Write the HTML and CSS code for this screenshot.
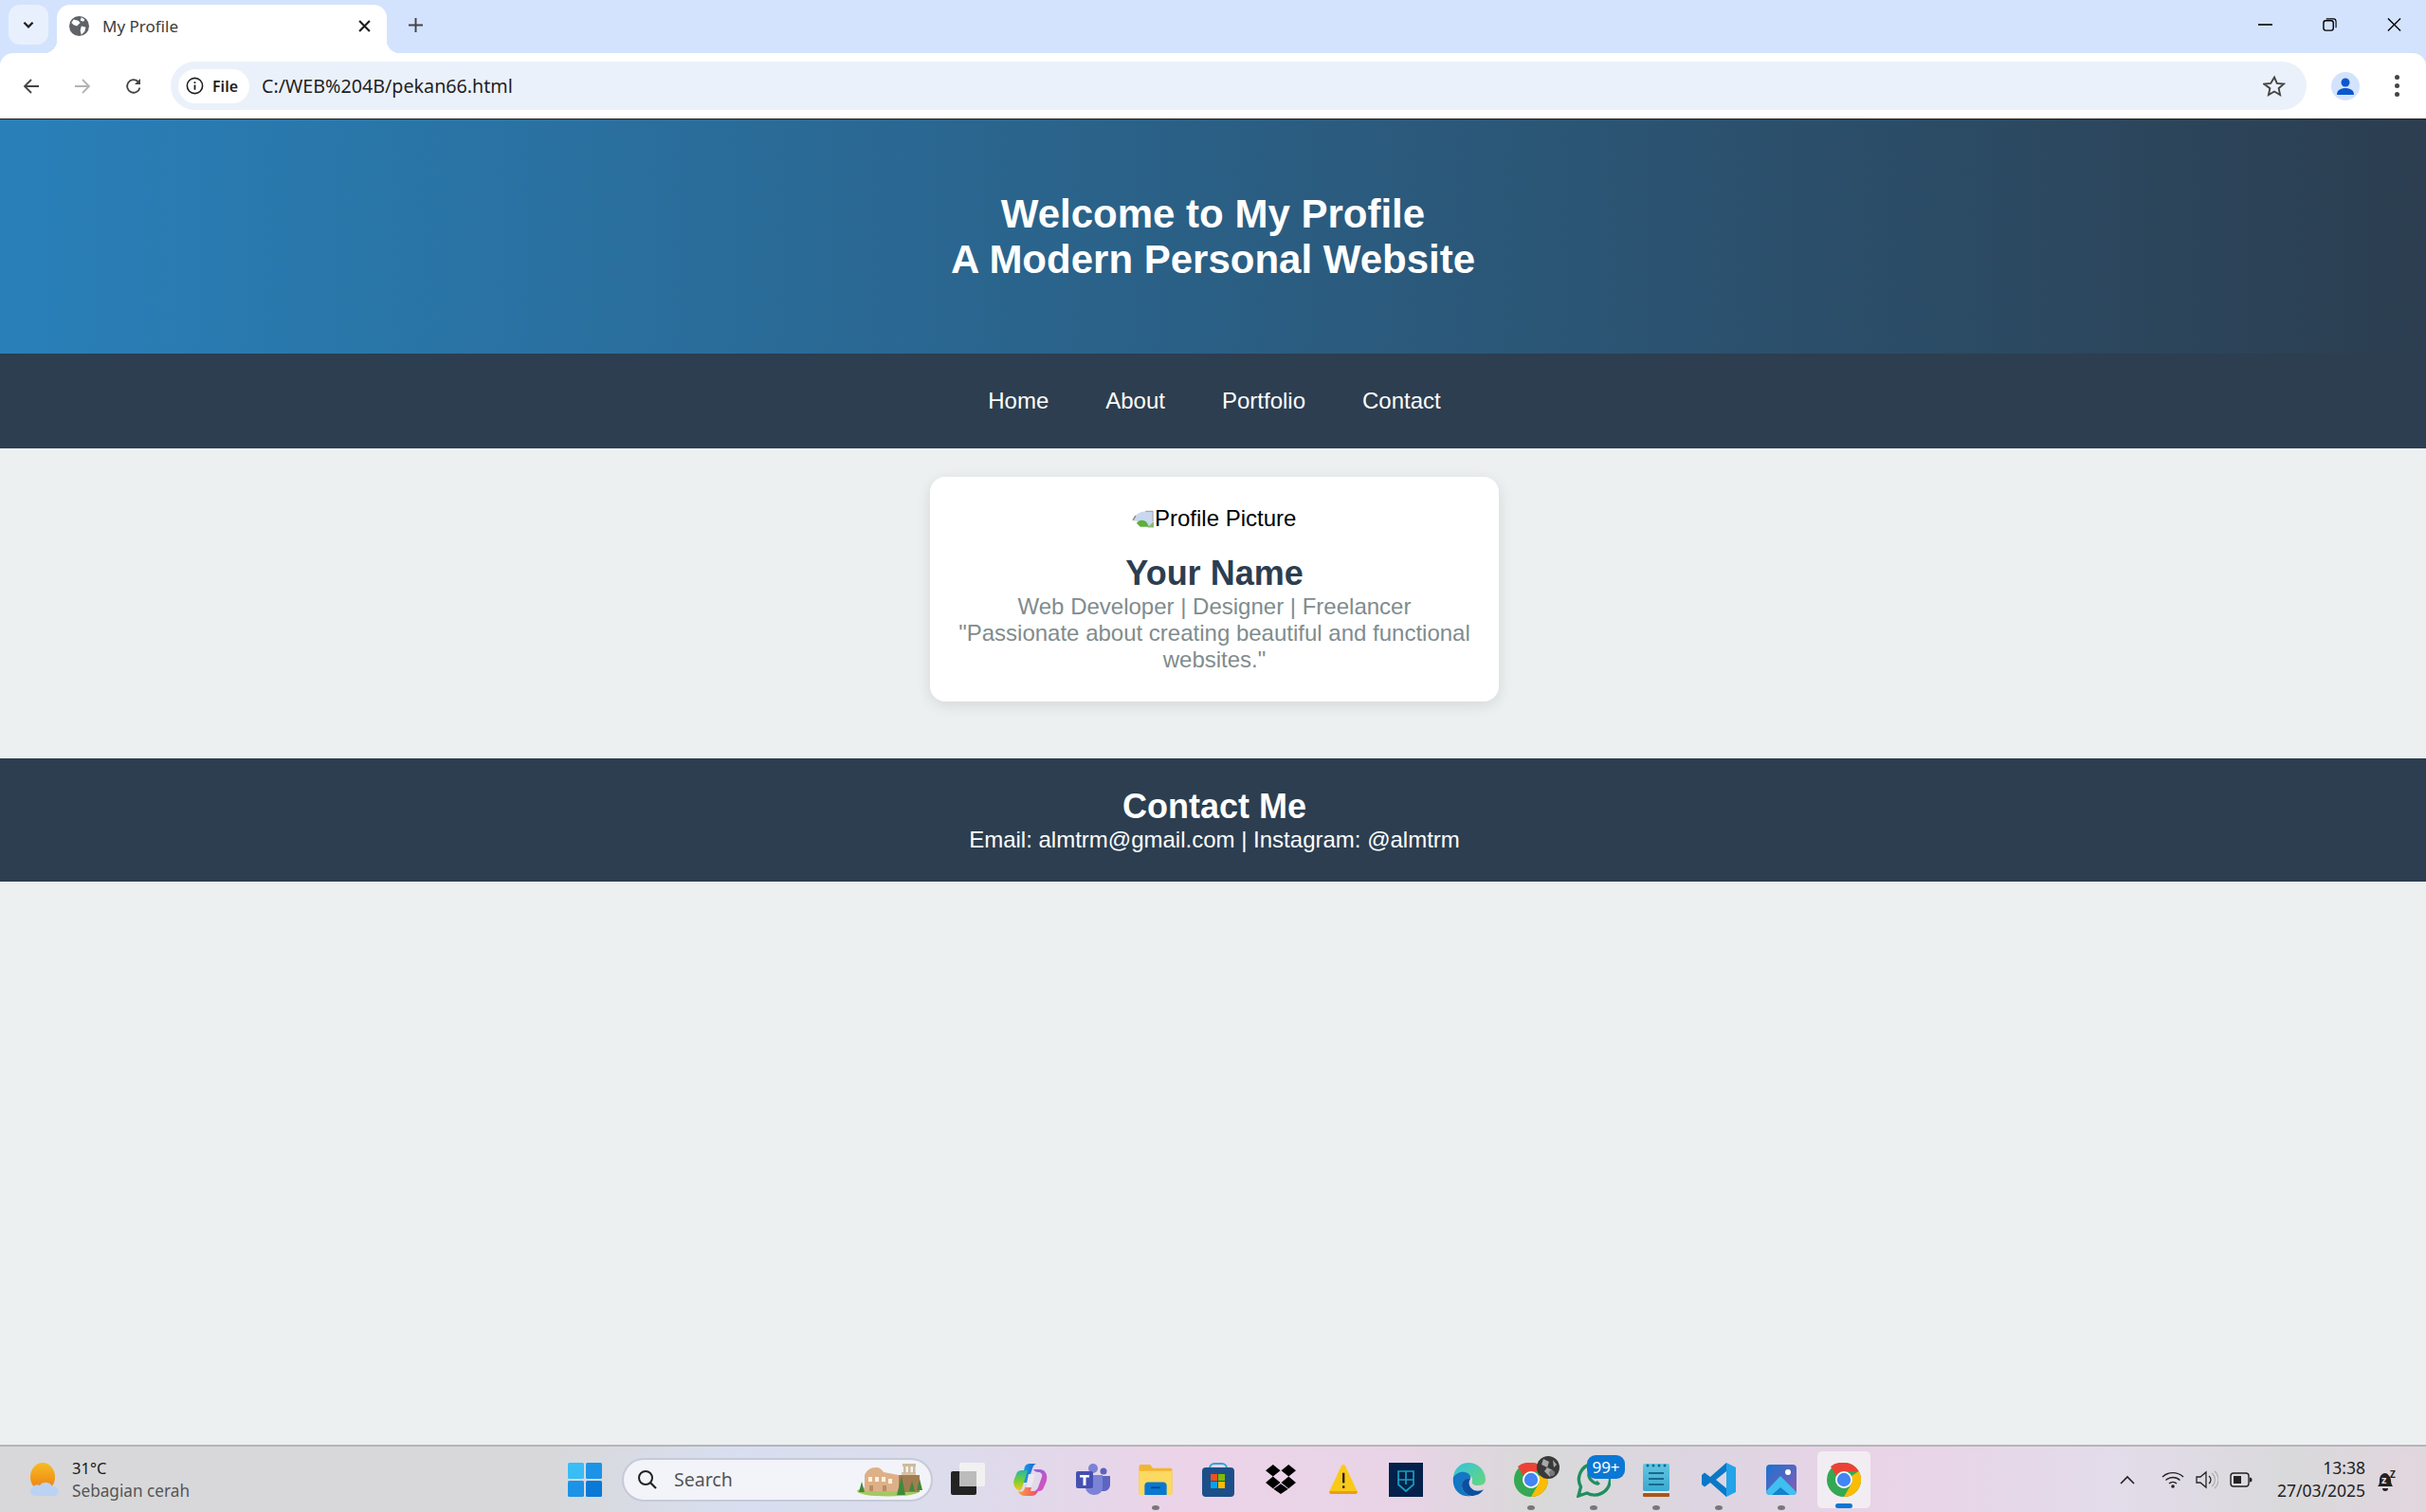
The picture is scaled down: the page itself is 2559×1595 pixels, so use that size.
FILE: index.html
```html
<!DOCTYPE html>
<html lang="en">
<head>
    <meta charset="UTF-8">
    <meta name="viewport" content="width=device-width, initial-scale=1.0">
    <title>My Profile</title>
    <link rel="stylesheet" href="styles.css">
</head>
<body>
<div class="screen">
    <!-- browser top -->
    <div class="tabstrip">
        <div class="tab-search">
            <svg width="16" height="16" viewBox="0 0 14 14"><path d="M3 5l4 4 4-4" fill="none" stroke="#1f1f1f" stroke-width="2"/></svg>
        </div>
        <div class="tab">
            <svg class="favicon" width="21" height="21" viewBox="0 0 18 18">
                <circle cx="9" cy="9" r="9" fill="#5f6368"/>
                <path d="M4 3l4 1 2 2-2 2-1 1-3-1-2-2zM11 9l4 1-1 4-3 3-1-4zM11 1l3 2-1 2-3-1z" fill="#fff"/>
            </svg>
            <span class="tab-title">My Profile</span>
            <svg class="tab-close" width="13" height="13" viewBox="0 0 12 12"><path d="M1 1l10 10M11 1L1 11" stroke="#1f1f1f" stroke-width="2"/></svg>
        </div>
        <svg class="new-tab" width="15" height="15" viewBox="0 0 14 14"><path d="M7 0v14M0 7h14" stroke="#444" stroke-width="1.800"/></svg>
        <div class="window-btns">
            <svg width="15" height="16" viewBox="0 0 15 16"><path d="M0 8h15" stroke="#000" stroke-width="1.600"/></svg>
            <svg width="15" height="16" viewBox="0 0 16 16"><rect x="1" y="3.500" width="11" height="11" rx="2.500" fill="none" stroke="#000" stroke-width="1.500"/><path d="M4 1.500h8a3 3 0 0 1 3 3v7" fill="none" stroke="#000" stroke-width="1.200"/></svg>
            <svg width="15" height="16" viewBox="0 0 16 16"><path d="M1 1l14 14M15 1L1 15" stroke="#000" stroke-width="1.500"/></svg>
        </div>
    </div>
    <div class="toolbar">
        <svg class="tool-icon" width="18" height="18" viewBox="0 0 18 18"><path d="M17 9H2M9 2L2 9l7 7" fill="none" stroke="#444" stroke-width="1.800"/></svg>
        <svg class="tool-icon" width="18" height="18" viewBox="0 0 18 18"><path d="M1 9h15M9 2l7 7-7 7" fill="none" stroke="#b3b3b3" stroke-width="1.800"/></svg>
        <svg class="tool-icon" width="18" height="18" viewBox="0 0 18 18"><path d="M15.500 10.500A6.800 6.800 0 1 1 13.600 4" fill="none" stroke="#444" stroke-width="1.800"/><path d="M16 1v6h-6z" fill="#444"/></svg>
        <div class="omnibox">
            <div class="chip">
                <svg width="19" height="19" viewBox="0 0 18 18"><circle cx="9" cy="9" r="7.700" fill="none" stroke="#1f1f1f" stroke-width="1.500"/><path d="M9 8v5M9 5v1.600" stroke="#1f1f1f" stroke-width="1.700"/></svg>
                <span>File</span>
            </div>
            <span class="url">C:/WEB%204B/pekan66.html</span>
            <svg class="star" width="24" height="24" viewBox="0 0 24 24"><path d="M12 2.500l2.800 6.400 7 .7-5.200 4.600 1.500 6.800-6.100-3.500-6.100 3.500 1.500-6.800L1.200 9.600l7-.7z" fill="none" stroke="#444" stroke-width="1.900"/></svg>
        </div>
        <div class="avatar">
            <svg width="20" height="20" viewBox="0 0 20 20"><circle cx="10" cy="6" r="4.500" fill="#0b57d0"/><path d="M1 19c0-5 4-7 9-7s9 2 9 7z" fill="#0b57d0"/></svg>
        </div>
        <div class="kebab"><i></i><i></i><i></i></div>
    </div>

    <!-- the page itself -->
    <main class="page">
        <header class="hero">
            <h1>Welcome to My Profile<br>A Modern Personal Website</h1>
        </header>
        <nav class="menu">
            <a href="#">Home</a>
            <a href="#">About</a>
            <a href="#">Portfolio</a>
            <a href="#">Contact</a>
        </nav>
        <section class="card">
            <div class="broken-img">
                <svg width="24" height="19" viewBox="0 0 25 19"><path d="M15 1h8v16h-4L9 13 1 11l3-6 6-3z" fill="#c9d7ef"/><path d="M5 14c3-4 8-4 11-1l3 5H9z" fill="#5daf3b"/><path d="M15 1h8v11" fill="none" stroke="#aaa" stroke-width="1.200"/><path d="M24 12v7h-7z" fill="#8cbb70"/><path d="M1 11l3-5" stroke="#888" stroke-width="1.500"/></svg>
                <span>Profile Picture</span>
            </div>
            <h2>Your Name</h2>
            <p>Web Developer | Designer | Freelancer</p>
            <p>"Passionate about creating beautiful and functional websites."</p>
        </section>
        <footer class="contact">
            <h2>Contact Me</h2>
            <p>Email: almtrm@gmail.com | Instagram: @almtrm</p>
        </footer>
    </main>

    <!-- windows taskbar -->
    <div class="taskbar">
        <div class="weather">
            <svg width="36" height="38" viewBox="0 0 36 38">
                <defs><linearGradient id="sun" x1="0" y1="0" x2="0" y2="1"><stop offset="0" stop-color="#f6bd22"/><stop offset="1" stop-color="#ef7b12"/></linearGradient></defs>
                <ellipse cx="15" cy="16" rx="13" ry="15" fill="url(#sun)"/>
                <path d="M7 36a5 5 0 0 1-3-9 6 6 0 0 1 8-2 7.500 7.500 0 0 1 13 1 5 5 0 0 1 3 10z" fill="#bcd2f3"/>
            </svg>
            <div>
                <div class="temp">31°C</div>
                <div class="sky">Sebagian cerah</div>
            </div>
        </div>
        <div class="task-center">
            <div class="task-item">
                <svg width="36" height="36" viewBox="0 0 36 36"><rect width="17" height="17" rx="1.500" fill="#39bdf6"/><rect x="19" width="17" height="17" rx="1.500" fill="#1c93e6"/><rect y="19" width="17" height="17" rx="1.500" fill="#1c93e6"/><rect x="19" y="19" width="17" height="17" rx="1.500" fill="#0a78d6"/></svg>
            </div>
            <div class="search-box">
                <svg width="22" height="22" viewBox="0 0 22 22"><circle cx="9" cy="9" r="7" fill="none" stroke="#222" stroke-width="2"/><path d="M14 14l6 6" stroke="#222" stroke-width="2.200"/></svg>
                <span>Search</span>
                <svg class="search-art" width="70" height="36" viewBox="0 0 70 36">
                    <ellipse cx="33" cy="30" rx="33" ry="5.500" fill="#a5c862"/>
                    <path d="M8 30V13c2-5 6-8 12-8 4 0 6 2 8 5l16 3v17z" fill="#deb088"/>
                    <rect x="44" y="13" width="22" height="18" fill="#a57c52"/>
                    <rect x="47" y="10" width="15" height="3" fill="#d6c4a8"/>
                    <path d="M48 1h14v3H48zM49 4h2.500v7H49zM54 4h2.500v7H54zM59 4h2.500v7H59z" fill="#d0ba9a"/>
                    <rect x="12" y="15" width="4" height="5" fill="#fff2df"/><rect x="19" y="15" width="4" height="5" fill="#fff2df"/><rect x="26" y="15" width="4" height="5" fill="#fff2df"/><rect x="33" y="17" width="4" height="5" fill="#fff2df"/>
                    <rect x="13" y="24" width="4" height="6" fill="#b98d64"/><rect x="27" y="24" width="4" height="6" fill="#b98d64"/>
                    <path d="M5 20l3 11H2zM47 14l4 20h-9zM58 19l3 11h-6zM66 17l3 12h-6z" fill="#3f8a3a"/>
                </svg>
            </div>
            <div class="task-item">
                <svg width="36" height="35" viewBox="0 0 36 35"><rect x="0" y="9" width="27" height="25" rx="2" fill="#232323"/><rect x="9" y="0" width="27" height="25" rx="2" fill="#f1f1f1"/><rect x="9" y="9" width="18" height="16" fill="#bcbcbc"/></svg>
            </div>
            <div class="task-item">
                <svg width="36" height="34" viewBox="0 0 36 34">
                    <defs>
                        <linearGradient id="cop1" x1="0" y1="0" x2="1" y2="0"><stop offset="0" stop-color="#1aa6e8"/><stop offset="1" stop-color="#1d5fd0"/></linearGradient>
                        <linearGradient id="cop2" x1="0" y1="0" x2="0" y2="1"><stop offset="0" stop-color="#25b8a8"/><stop offset=".55" stop-color="#7fd02c"/><stop offset="1" stop-color="#fbc51c"/></linearGradient>
                        <linearGradient id="cop3" x1="0" y1="0" x2="1" y2="1"><stop offset="0" stop-color="#8a63e8"/><stop offset="1" stop-color="#e94fb0"/></linearGradient>
                        <linearGradient id="cop4" x1="0" y1="0" x2="1" y2="0"><stop offset="0" stop-color="#f8a23a"/><stop offset="1" stop-color="#ee4a6e"/></linearGradient>
                    </defs>
                    <path d="M12 3c1-2 3-3 5-3h8c-3 0-4 2-5 5l-5 15H8z" fill="url(#cop1)"/>
                    <path d="M9 7h6L9 26c-1 2-2 3-4 2-4-2-6-7-4-12l2-5c1-3 3-4 6-4z" fill="url(#cop2)"/>
                    <path d="M21 6h6c4 0 7 2 8 6 1 5-1 9-3 13-1 3-3 4-6 4h-5c3 0 4-2 5-4l4-11c1-3-1-5-4-5-2 0-4-1-5-3z" fill="url(#cop3)"/>
                    <path d="M11 28l4-8h5l-2 9c-1 3-3 5-6 5-3 0-6-2-7-5 2 1 5 1 6-1z M18 29h8c-1 3-4 5-7 5h-7c3 0 5-2 6-5z" fill="url(#cop4)"/>
                    <path d="M16 11h7l-4 14h-6z" fill="#efe6f0"/>
                </svg>
            </div>
            <div class="task-item">
                <svg width="36" height="33" viewBox="0 0 36 33">
                    <circle cx="18" cy="5" r="5" fill="#7b83d6"/><circle cx="29" cy="8" r="3.500" fill="#5b63bd"/>
                    <path d="M24 13h12v9c0 4-3 7-6 7h-6z" fill="#5d65c0"/>
                    <path d="M10 12h18v13c0 5-4 8-9 8s-9-4-9-8z" fill="#7b83d6"/>
                    <rect x="0" y="8" width="18" height="18" rx="2" fill="#4650b0"/>
                    <path d="M4 12h10v2.500h-3.500V23H7.500v-8.500H4z" fill="#fff"/>
                </svg>
            </div>
            <div class="task-item has-dot">
                <svg width="36" height="33" viewBox="0 0 36 34"><path d="M0 3a2 2 0 0 1 2-2h10l3 4h19a2 2 0 0 1 2 2v25a2 2 0 0 1-2 2H2a2 2 0 0 1-2-2z" fill="#f2b531"/><path d="M0 8h36v24a2 2 0 0 1-2 2H2a2 2 0 0 1-2-2z" fill="#fcd960"/><path d="M6 34V24a4 4 0 0 1 4-4h16a4 4 0 0 1 4 4v10z" fill="#0a78d0"/><rect x="13" y="25" width="10" height="2" fill="#034f9a"/></svg>
            </div>
            <div class="task-item">
                <svg width="36" height="36" viewBox="0 0 36 36"><path d="M9 6a5 5 0 0 1 5-5h8a5 5 0 0 1 5 5v3" fill="none" stroke="#25a7dc" stroke-width="2"/><rect x="1" y="5" width="34" height="31" rx="4" fill="#1c4f8a"/><rect x="10" y="12" width="7" height="7" fill="#f25022"/><rect x="18" y="12" width="7" height="7" fill="#7fba00"/><rect x="10" y="20" width="7" height="7" fill="#00a4ef"/><rect x="18" y="20" width="7" height="7" fill="#ffb900"/></svg>
            </div>
            <div class="task-item">
                <svg width="36" height="31" viewBox="0 0 36 32"><path d="M9.500 0l8 6.500-8 6.500-8-6.500zM26.500 0l8 6.500-8 6.500-8-6.500zM9.500 13l8 6.500-8 6.500-8-6.500zM26.500 13l8 6.500-8 6.500-8-6.500zM18 21l8 5.500-8 5.500-8-5.500z" fill="#000"/></svg>
            </div>
            <div class="task-item">
                <svg width="32" height="33" viewBox="0 0 32 34"><path d="M16 1c1 0 2 1 2.500 2L31 30c.6 1.500-.3 3-2 3H3c-1.700 0-2.600-1.500-2-3L13.500 3c.5-1 1.500-2 2.500-2z" fill="#fbc91a"/><path d="M3 33h26c1.700 0 2.600-1.500 2-3H1c-.6 1.500.3 3 2 3z" fill="#e79f10"/><rect x="15" y="10" width="2.400" height="11" fill="#222"/><rect x="15" y="24" width="2.400" height="2.600" fill="#222"/></svg>
            </div>
            <div class="task-item">
                <svg width="36" height="36" viewBox="0 0 36 36"><rect width="36" height="36" fill="#03214a"/><path d="M10 9h16v14l-8 7-8-7zM18 9v14M10 18h16" fill="none" stroke="#15a0c4" stroke-width="1.700"/></svg>
            </div>
            <div class="task-item">
                <svg width="36" height="36" viewBox="0 0 36 36">
                    <defs><linearGradient id="edge" x1="0" y1="0" x2="1" y2="1"><stop offset="0" stop-color="#35c1e1"/><stop offset="1" stop-color="#66d975"/></linearGradient></defs>
                    <path d="M2 15C3 6 10 0 18 0c10 0 18 8 18 18 0 3-2 6-8 6-5 0-7-2-6-5 1-4-4-8-10-8-4 0-8 2-10 4z" fill="url(#edge)"/>
                    <path d="M2 15c3-4 8-6 12-5 5 1 7 4 6 7-4-1-9 2-9 7 0 5 4 10 10 11C10 37 0 29 2 15z" fill="#1277c4"/>
                    <path d="M20 17c-5-1-9 2-9 7 0 5 4 10 10 11 5 0 10-2 13-7-3 2-9 3-13-1-3-3-3-7-1-10z" fill="#0c4f9e"/>
                </svg>
            </div>
            <div class="task-item has-dot">
                <svg width="36" height="36" viewBox="0 0 36 36">
                    <circle cx="18" cy="18" r="18" fill="#34a853"/>
                    <path d="M18 0a18 18 0 0 1 15.600 9H18a9 9 0 0 0-8 5L4 4A18 18 0 0 1 18 0z" fill="#ea4335"/>
                    <path d="M33.600 9A18 18 0 0 1 18 36l7.800-13.500A9 9 0 0 0 26 14z" fill="#fbbc04"/>
                    <circle cx="18" cy="18" r="9" fill="#fff"/><circle cx="18" cy="18" r="7.200" fill="#4285f4"/>
                </svg>
                <svg class="chrome-avatar" width="24" height="24" viewBox="0 0 24 24"><ellipse cx="12" cy="12" rx="12" ry="12" fill="#3a3a3a"/><path d="M7 3l6 3-2 6 6 3-3 7-6-6 3-4-6-3zM17 4l4 5-3 3z" fill="#a8a8a8"/><circle cx="16" cy="18" r="3" fill="#777"/></svg>
            </div>
            <div class="task-item has-dot">
                <svg width="36" height="38" viewBox="0 0 36 38"><path d="M2 36l2.500-9.500A16.500 16.500 0 1 1 11 33z" fill="none" stroke="#1f8f5f" stroke-width="3.400"/><path d="M12 11c-2 3 0 8 4 11s7 4 9 1l-3-3-2 1c-2-1-4-3-5-5l1-2-2-3z" fill="#1f8f5f"/></svg>
                <span class="badge">99+</span>
            </div>
            <div class="task-item has-dot">
                <svg width="28" height="36" viewBox="0 0 28 36">
                    <defs><linearGradient id="note" x1="0" y1="0" x2="0" y2="1"><stop offset="0" stop-color="#63c5e3"/><stop offset="1" stop-color="#3ba9cf"/></linearGradient></defs>
                    <rect y="1" width="28" height="29" rx="2" fill="url(#note)"/><rect y="30" width="28" height="2" fill="#efe7dc"/><rect y="32" width="28" height="4" rx="1" fill="#a8571e"/>
                    <path d="M6 11h16M6 17h16M6 23h16" stroke="#176a8e" stroke-width="2"/>
                    <circle cx="5" cy="3" r="1.500" fill="#176a8e"/><circle cx="11" cy="3" r="1.500" fill="#176a8e"/><circle cx="17" cy="3" r="1.500" fill="#176a8e"/><circle cx="23" cy="3" r="1.500" fill="#176a8e"/>
                </svg>
            </div>
            <div class="task-item has-dot">
                <svg width="36" height="36" viewBox="0 0 36 36"><path d="M26 0l10 5v26l-10 5z" fill="#23a3ea"/><path d="M26 0L9 15 3 10.500 0 13v10l3 2.500L9 21l17 15v-9L15 18 26 9z" fill="#0a78c6"/></svg>
            </div>
            <div class="task-item has-dot">
                <svg width="32" height="32" viewBox="0 0 32 32">
                    <defs><linearGradient id="pic" x1="0" y1="0" x2="1" y2="1"><stop offset="0" stop-color="#1b72d0"/><stop offset="1" stop-color="#8a5bb5"/></linearGradient></defs>
                    <rect width="32" height="32" rx="4" fill="url(#pic)"/><circle cx="23" cy="8" r="3" fill="#fff"/>
                    <path d="M0 28L15 12l17 17v-1a4 4 0 0 1-4 4H4a4 4 0 0 1-4-4z" fill="#3fc0f0"/><path d="M6 32l9-8 10 8z" fill="#1780cc"/>
                </svg>
            </div>
            <div class="task-item active">
                <svg width="36" height="36" viewBox="0 0 36 36">
                    <circle cx="18" cy="18" r="18" fill="#34a853"/>
                    <path d="M18 0a18 18 0 0 1 15.600 9H18a9 9 0 0 0-8 5L4 4A18 18 0 0 1 18 0z" fill="#ea4335"/>
                    <path d="M33.600 9A18 18 0 0 1 18 36l7.800-13.500A9 9 0 0 0 26 14z" fill="#fbbc04"/>
                    <circle cx="18" cy="18" r="9" fill="#fff"/><circle cx="18" cy="18" r="7.200" fill="#4285f4"/>
                </svg>
            </div>
        </div>
        <div class="tray">
            <svg class="tray-chevron" width="16" height="10" viewBox="0 0 16 10"><path d="M1 9l7-7 7 7" fill="none" stroke="#222" stroke-width="1.600"/></svg>
            <svg width="24" height="18" viewBox="0 0 24 18"><path d="M1 6a16 16 0 0 1 22 0M4.500 9.500a11 11 0 0 1 15 0M8 13a6 6 0 0 1 8 0" fill="none" stroke="#222" stroke-width="1.400"/><circle cx="12" cy="16" r="1.800" fill="#222"/></svg>
            <svg width="24" height="20" viewBox="0 0 24 20"><path d="M1 7h4l6-5v16l-6-5H1z" fill="none" stroke="#222" stroke-width="1.300"/><path d="M14 6a5 5 0 0 1 0 8" fill="none" stroke="#222" stroke-width="1.300"/><path d="M17 3a9 9 0 0 1 0 14M20 1a12 12 0 0 1 0 18" fill="none" stroke="#aaa" stroke-width="1.100"/></svg>
            <svg width="24" height="16" viewBox="0 0 24 16"><rect x="1" y="1" width="19" height="14" rx="3" fill="none" stroke="#222" stroke-width="1.400"/><rect x="4" y="4" width="8" height="8" fill="#222"/><path d="M21 5.500a2.500 2.500 0 0 1 0 5z" fill="#222"/></svg>
            <div class="clock"><div>13:38</div><div>27/03/2025</div></div>
            <svg class="bell" width="22" height="28" viewBox="0 0 22 28"><path d="M0 21c2-2 2-4 2-8a6 6 0 0 1 8-5.500l3 3.500 1 3c0 4 1 5 2 7z" fill="#222"/><path d="M5 23h6a3 3 0 0 1-6 0z" fill="#222"/><text x="4" y="18" class="bell-z">z</text><text x="13" y="12" class="bell-top">Z</text></svg>
        </div>
    </div>
</div>
</body>
</html>
```

FILE: styles.css
```css
* {
    box-sizing: border-box;
}
body {
    margin: 0;
    font-family: "Liberation Sans", Arial, sans-serif;
}
.screen {
    height: 1595px;
    display: flex;
    flex-direction: column;
    overflow: hidden;
    background: #d3e3fd;
}

/* browser top */
.tabstrip {
    height: 56px;
    flex: none;
    display: flex;
    align-items: flex-end;
    background: #d3e3fd;
    font-family: "Noto Sans", sans-serif;
}
.tab-search {
    width: 42px;
    height: 42px;
    margin: 0 9px 9px 9px;
    border-radius: 12px;
    background: #e9f0fd;
    display: flex;
    align-items: center;
    justify-content: center;
}
.tab {
    width: 348px;
    height: 51px;
    padding: 0 17px 7px 13px;
    position: relative;
    background: #fff;
    border-radius: 14px 14px 0 0;
    display: flex;
    align-items: center;
}
.tab::before,
.tab::after {
    content: "";
    position: absolute;
    bottom: 0;
    width: 14px;
    height: 14px;
}
.tab::before {
    left: -14px;
    background: radial-gradient(circle at 0 0, transparent 14px, #fff 14.5px);
}
.tab::after {
    right: -14px;
    background: radial-gradient(circle at 100% 0, transparent 14px, #fff 14.5px);
}
.tab-title {
    margin-left: 14px;
    font-size: 17px;
    color: #3c3c3c;
    flex: 1;
}
.new-tab {
    margin: 0 0 22px 23px;
}
.window-btns {
    margin-left: auto;
    margin-bottom: 5px;
    height: 50px;
    padding-right: 26px;
    display: flex;
    align-items: center;
    gap: 53px;
}
.toolbar {
    height: 70px;
    flex: none;
    display: flex;
    align-items: center;
    padding: 0 0 0 24px;
    background: #fff;
    border-radius: 14px 14px 0 0;
    border-bottom: 1px solid #222;
}
.tool-icon + .tool-icon {
    margin-left: 36px;
}
.omnibox {
    width: 2253px;
    height: 51px;
    margin-left: 30px;
    padding: 0 22px 0 8px;
    border-radius: 26px;
    background: #ebf1fa;
    display: flex;
    align-items: center;
}
.chip {
    width: 75px;
    height: 36px;
    flex: none;
    border-radius: 18px;
    background: #fff;
    display: flex;
    align-items: center;
    gap: 9px;
    padding-left: 8px;
    font: 600 16px "Noto Sans", sans-serif;
    color: #1f1f1f;
}
.url {
    margin-left: 13px;
    font: 19.7px "Noto Sans", sans-serif;
    color: #1f1f1f;
}
.star {
    margin-left: auto;
}
.avatar {
    width: 30px;
    height: 30px;
    margin-left: 26px;
    border-radius: 50%;
    background: #d3e3fd;
    display: flex;
    align-items: center;
    justify-content: center;
}
.kebab {
    margin-left: 37px;
    display: flex;
    flex-direction: column;
    gap: 4px;
}
.kebab i {
    width: 5px;
    height: 5px;
    border-radius: 50%;
    background: #444;
}

/* the page itself */
.page {
    flex: 1;
    display: flex;
    flex-direction: column;
    align-items: center;
    background: #ecf0f1;
}
.hero {
    width: 100%;
    height: 247px;
    flex: none;
    display: flex;
    align-items: center;
    justify-content: center;
    background: linear-gradient(90deg, #2980b9, #2c3e50);
}
.hero h1 {
    margin: 0;
    font-size: 42px;
    line-height: 48px;
    color: #fff;
    text-align: center;
}
.menu {
    width: 100%;
    height: 100px;
    flex: none;
    padding-left: 3px;
    display: flex;
    align-items: center;
    justify-content: center;
    gap: 60px;
    background: #2c3e50;
}
.menu a {
    font-size: 24px;
    color: #fff;
    text-decoration: none;
}
.card {
    width: 600px;
    height: 237px;
    flex: none;
    margin: 30px 0 0 3px;
    padding: 35px 30px 0;
    background: #fff;
    border-radius: 16px;
    box-shadow: 0 4px 15px rgba(0, 0, 0, 0.1);
    text-align: center;
}
/* alt text of the missing picture, cut by the round corners */
.broken-img {
    width: 174px;
    height: 19px;
    margin: 0 auto;
    display: flex;
    align-items: flex-start;
    overflow: hidden;
    border-radius: 12px;
    font-size: 24px;
    line-height: 18px;
    color: #000;
}
.broken-img span {
    white-space: nowrap;
}
.broken-img svg {
    flex: none;
}
.card h2 {
    margin: 27px 0 0;
    font-size: 36px;
    line-height: 41px;
    color: #2c3e50;
}
.card p {
    margin: 0;
    position: relative;
    top: 1px;
    font-size: 24px;
    line-height: 28px;
    color: #7f8c8d;
}
.contact {
    width: 100%;
    height: 130px;
    flex: none;
    margin-top: 60px;
    padding: 30px 0 0 3px;
    background: #2c3e50;
    color: #fff;
    text-align: center;
}
.contact h2 {
    margin: 0;
    font-size: 36px;
    line-height: 42px;
}
.contact p {
    margin: 0;
    font-size: 24px;
    line-height: 28px;
}

/* windows taskbar */
.taskbar {
    height: 71px;
    flex: none;
    display: flex;
    align-items: center;
    border-top: 2px solid #b6b4b8;
    background: linear-gradient(90deg, #d8d8da 0, #d8d8da 580px, #d8dff0 780px, #dcdcec 1000px, #ecd3e8 1250px, #e8d4e6 1480px, #d9d9d9 1620px, #ddd5e2 1800px, #e9d3e7 1980px, #e3dcea 2230px, #d9d9db 2420px, #e2d6de 2559px);
    font-family: "Noto Sans", sans-serif;
}
.weather {
    width: 584px;
    flex: none;
    padding-left: 30px;
    display: flex;
    align-items: center;
    gap: 10px;
    line-height: 24px;
}
.temp {
    font-size: 16.5px;
    color: #1a1a1a;
}
.sky {
    font-size: 17.2px;
    color: #555;
}
.task-center {
    display: flex;
    align-items: center;
}
.task-item {
    width: 66px;
    height: 60px;
    flex: none;
    position: relative;
    display: flex;
    align-items: center;
    justify-content: center;
}
.search-box {
    width: 328px;
    height: 46px;
    margin: 0 4px 0 6px;
    padding: 0 8px 0 14px;
    border-radius: 23px;
    background: #f2f4fa;
    border: 2px solid #c6cad8;
    display: flex;
    align-items: center;
    gap: 17px;
    font-size: 19.5px;
    color: #555;
}
.search-art {
    margin-left: auto;
}
.has-dot::after {
    content: "";
    position: absolute;
    left: 50%;
    bottom: -2px;
    width: 8px;
    height: 5px;
    margin-left: -4px;
    border-radius: 50%;
    background: #777;
}
.active {
    width: 56px;
    margin-left: 5px;
    background: #f2edf2;
    border-radius: 5px;
}
.active::after {
    content: "";
    position: absolute;
    left: 50%;
    bottom: 0;
    width: 18px;
    height: 5px;
    margin-left: -9px;
    border-radius: 3px;
    background: #0a78d4;
}
.chrome-avatar {
    position: absolute;
    top: 5px;
    right: 3px;
}
.badge {
    position: absolute;
    top: 4px;
    right: 0;
    width: 40px;
    height: 25px;
    border-radius: 9px;
    background: #0a78d4;
    color: #fff;
    font-size: 17px;
    line-height: 25px;
    text-align: center;
}
.tray {
    margin-left: auto;
    padding-right: 29px;
    display: flex;
    align-items: center;
    gap: 12px;
}
.tray-chevron {
    margin-right: 16px;
}
.clock {
    margin: -2px 0 0 14px;
    font-size: 17.5px;
    line-height: 24px;
    text-align: right;
    color: #222;
}
.bell {
    margin-left: 1px;
}
.bell-z {
    font-size: 11px;
    font-weight: 700;
    fill: #e4dbe2;
}
.bell-top {
    font-size: 10px;
    font-weight: 700;
    fill: #222;
}
```
